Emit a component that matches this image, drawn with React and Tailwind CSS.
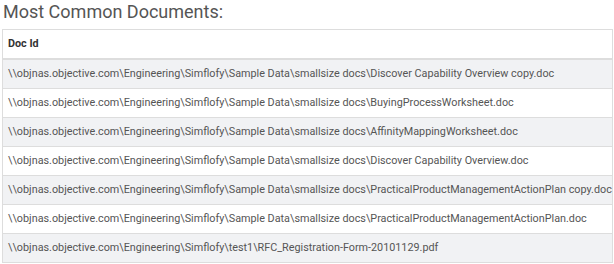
import React from 'react';

const docs = [
  '\\\\objnas.objective.com\\Engineering\\Simflofy\\Sample Data\\smallsize docs\\Discover Capability Overview copy.doc',
  '\\\\objnas.objective.com\\Engineering\\Simflofy\\Sample Data\\smallsize docs\\BuyingProcessWorksheet.doc',
  '\\\\objnas.objective.com\\Engineering\\Simflofy\\Sample Data\\smallsize docs\\AffinityMappingWorksheet.doc',
  '\\\\objnas.objective.com\\Engineering\\Simflofy\\Sample Data\\smallsize docs\\Discover Capability Overview.doc',
  '\\\\objnas.objective.com\\Engineering\\Simflofy\\Sample Data\\smallsize docs\\PracticalProductManagementActionPlan copy.doc',
  '\\\\objnas.objective.com\\Engineering\\Simflofy\\Sample Data\\smallsize docs\\PracticalProductManagementActionPlan.doc',
  '\\\\objnas.objective.com\\Engineering\\Simflofy\\test1\\RFC_Registration-Form-20101129.pdf',
];

export default function App() {
  return (
    <div className="w-[614px] h-[264px] overflow-hidden bg-white font-['Roboto',sans-serif] text-[#555]">
      <h2 className="pl-[3px] text-[18px] leading-[23px] h-[29px] text-[#555]">Most Common Documents:</h2>
      {/* table */}
      <div className="ml-[2px] w-[611px] border-x border-t border-[#ddd] text-[10.8px]">
        <div className="h-[30px] flex items-center px-[5px] border-b-2 border-[#ddd] font-bold text-[#333]">
          Doc Id
        </div>
        {docs.map((d, i) => (
          <div
            key={i}
            className={`h-[29px] flex items-center px-[5px] border-b border-[#ddd] whitespace-nowrap ${i % 2 === 0 ? 'bg-[#f1f2f4]' : 'bg-white'}`}
          >
            {d}
          </div>
        ))}
      </div>
    </div>
  );
}
